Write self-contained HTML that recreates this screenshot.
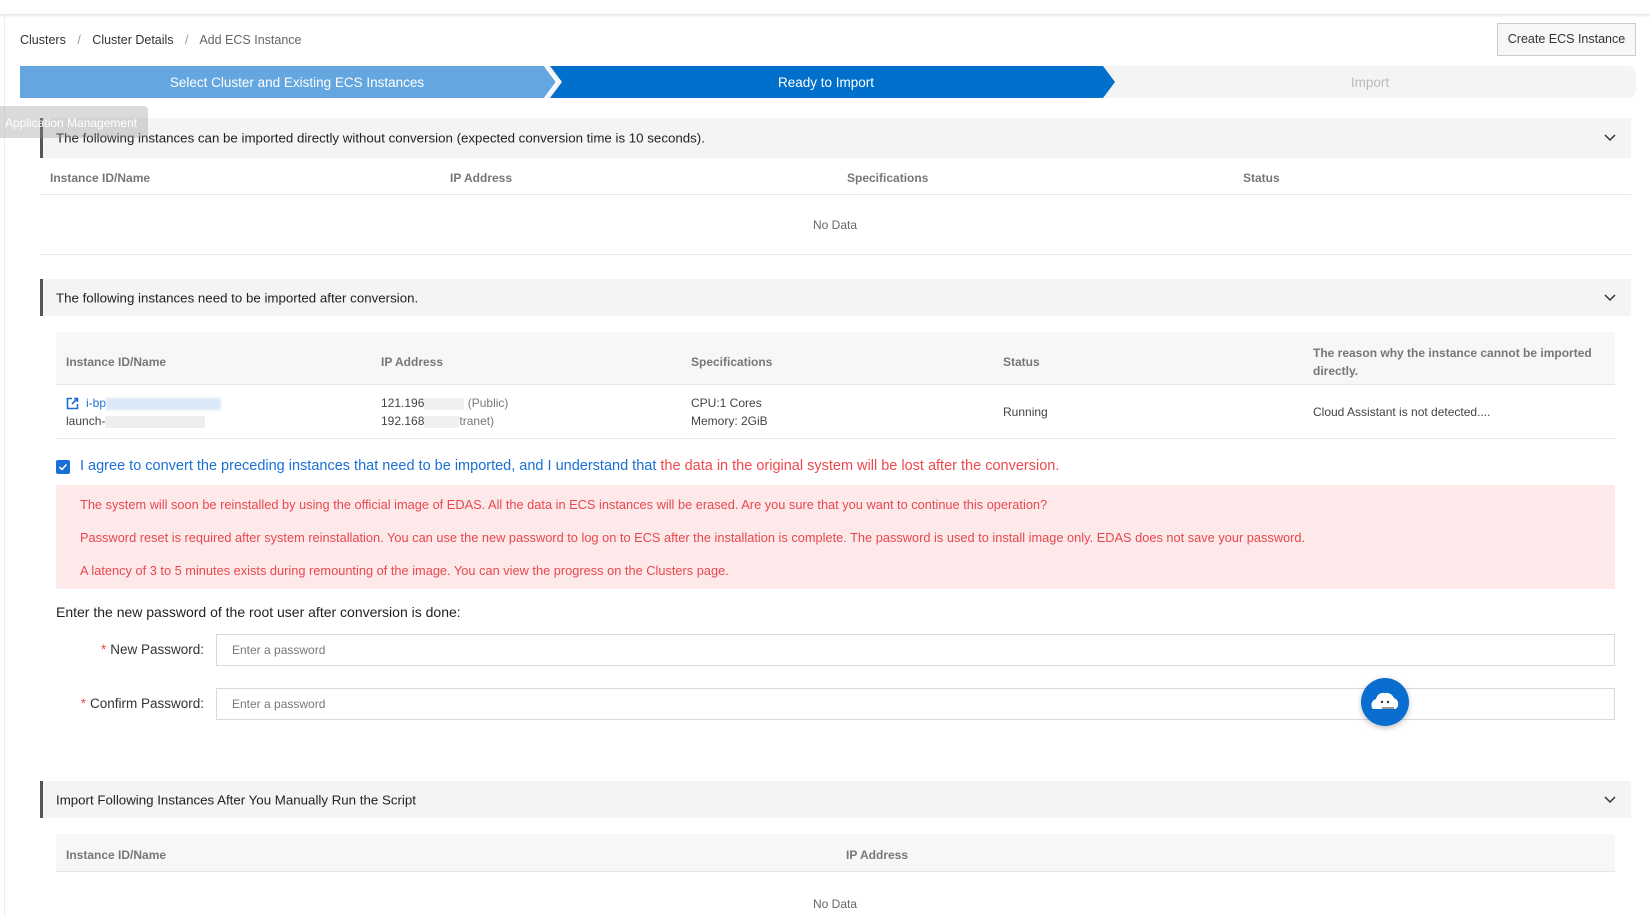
<!DOCTYPE html>
<html><head><meta charset="utf-8"><style>
*{margin:0;padding:0;box-sizing:border-box}
body{width:1650px;height:917px;overflow:hidden;background:#fff;font-family:"Liberation Sans",sans-serif;color:#333;position:relative}
.a{position:absolute;white-space:nowrap}
.sec{position:absolute;left:40px;width:1591px;background:#f3f4f6;border-left:3px solid #555;font-size:13.3px;color:#222}
.sec span{position:absolute;left:13px;top:50%;transform:translateY(-50%)}
.chev{position:absolute;right:14px;top:50%;margin-top:-7px}
.th{font-size:12px;font-weight:bold;color:#777}
.td{font-size:12px;color:#444}
.red{font-size:12.8px;color:#e8484d}
.inp{position:absolute;left:216px;width:1399px;height:32px;border:1px solid #d9d9d9;font-size:12px;color:#777;padding-left:15px;line-height:30px}
.lbl{position:absolute;right:1446px;font-size:13.5px;color:#333;white-space:nowrap}
.lbl b{color:#e8484d;font-weight:normal;margin-right:4px}
</style></head><body>
<div class="a" style="left:0;top:0;width:1650px;height:14px;background:#fff;box-shadow:0 1px 3px rgba(0,0,0,.15)"></div>
<div class="a" style="left:4px;top:14px;width:1px;height:903px;background:#eee"></div>
<div class="a" style="left:20px;top:33px;font-size:12.5px;color:#333">Clusters <span style="color:#999;margin:0 8px">/</span> Cluster Details <span style="color:#999;margin:0 8px">/</span> <span style="color:#666">Add ECS Instance</span></div>
<div class="a" style="left:1497px;top:23px;width:139px;height:33px;border:1px solid #ccc;background:#f7f7f7;font-size:12.5px;line-height:31px;text-align:center;color:#333">Create ECS Instance</div>
<svg class="a" style="left:20px;top:66px" width="1616" height="32">
<path d="M0 0H1608a8 8 0 0 1 8 8V24a8 8 0 0 1-8 8H0Z" fill="#f4f4f5"/>
<path d="M530 0H1083L1095 16 1083 32H530L542 16Z" fill="#0070cc"/>
<path d="M0 0H525L537 16 525 32H0Z" fill="#64a6df"/>
<path d="M525 0L537 16 525 32" stroke="#fff" stroke-width="2" fill="none"/>
<text x="277" y="21" font-size="13.5" fill="#fff" text-anchor="middle" font-family="Liberation Sans">Select Cluster and Existing ECS Instances</text>
<text x="806" y="21" font-size="13.5" fill="#fff" text-anchor="middle" font-family="Liberation Sans">Ready to Import</text>
<text x="1350" y="21" font-size="13.5" fill="#bbb" text-anchor="middle" font-family="Liberation Sans">Import</text>
</svg>

<div class="sec" style="top:118px;height:40px"><span>The following instances can be imported directly without conversion (expected conversion time is 10 seconds).</span>
<svg class="chev" width="14" height="14"><path d="M2 4L7 9 12 4" stroke="#333" stroke-width="1.5" fill="none"/></svg></div>
<div class="a" style="left:0;top:106px;width:148px;height:32px;background:rgba(150,150,150,.35);border-radius:0 4px 4px 0"></div>
<div class="a" style="left:5px;top:116px;font-size:12px;color:#fff">Application Management</div>

<div class="a" style="left:40px;top:158px;width:1591px;height:37px;border-bottom:1px solid #e6e6e6"></div>
<div class="a th" style="left:50px;top:171px">Instance ID/Name</div>
<div class="a th" style="left:450px;top:171px">IP Address</div>
<div class="a th" style="left:847px;top:171px">Specifications</div>
<div class="a th" style="left:1243px;top:171px">Status</div>
<div class="a td" style="left:813px;top:218px;color:#666">No Data</div>
<div class="a" style="left:40px;top:254px;width:1591px;height:1px;background:#e6e6e6"></div>

<div class="sec" style="top:279px;height:37px"><span>The following instances need to be imported after conversion.</span>
<svg class="chev" width="14" height="14"><path d="M2 4L7 9 12 4" stroke="#333" stroke-width="1.5" fill="none"/></svg></div>

<div class="a" style="left:56px;top:332px;width:1559px;height:53px;background:#f7f7f7;border-bottom:1px solid #e6e6e6"></div>
<div class="a th" style="left:66px;top:355px">Instance ID/Name</div>
<div class="a th" style="left:381px;top:355px">IP Address</div>
<div class="a th" style="left:691px;top:355px">Specifications</div>
<div class="a th" style="left:1003px;top:355px">Status</div>
<div class="a th" style="left:1313px;top:344px;line-height:18px">The reason why the instance cannot be imported<br>directly.</div>
<svg class="a" style="left:66px;top:397px" width="13" height="13"><path d="M6 1.5H1.5V11.5H11.5V7M8 1.5H11.5V5M11.5 1.5L6 7" stroke="#1a6fd6" stroke-width="1.6" fill="none"/></svg>
<div class="a td" style="left:86px;top:396px;color:#1a6fd6">i-bp<span style="display:inline-block;width:115px;height:12px;background:#dbe8f8;vertical-align:middle;filter:blur(1px)"></span></div>
<div class="a td" style="left:66px;top:414px">launch-<span style="display:inline-block;width:100px;height:12px;background:#eee;vertical-align:middle"></span></div>
<div class="a td" style="left:381px;top:396px">121.196<span style="display:inline-block;width:40px;height:12px;background:#f0f0f0;vertical-align:middle"></span> <span style="color:#777">(Public)</span></div>
<div class="a td" style="left:381px;top:414px">192.168<span style="display:inline-block;width:35px;height:12px;background:#f0f0f0;vertical-align:middle"></span><span style="color:#777">tranet)</span></div>
<div class="a td" style="left:691px;top:396px">CPU:1 Cores</div>
<div class="a td" style="left:691px;top:414px">Memory: 2GiB</div>
<div class="a td" style="left:1003px;top:405px">Running</div>
<div class="a td" style="left:1313px;top:405px">Cloud Assistant is not detected....</div>
<div class="a" style="left:56px;top:438px;width:1559px;height:1px;background:#e6e6e6"></div>

<svg class="a" style="left:56px;top:460px" width="14" height="14"><rect width="14" height="14" rx="2" fill="#1a6fd6"/><path d="M3.5 7L6 9.5 10.5 4.5" stroke="#fff" stroke-width="1.6" fill="none"/></svg>
<div class="a" style="left:80px;top:458px;font-size:14.5px;color:#1a6fd6">I agree to convert the preceding instances that need to be imported, and I understand that <span style="color:#f0484d">the data in the original system will be lost after the conversion.</span></div>
<div class="a" style="left:56px;top:485px;width:1559px;height:104px;background:#fde9ea"></div>
<div class="a red" style="left:80px;top:497px">The system will soon be reinstalled by using the official image of EDAS. All the data in ECS instances will be erased. Are you sure that you want to continue this operation?</div>
<div class="a red" style="left:80px;top:530px">Password reset is required after system reinstallation. You can use the new password to log on to ECS after the installation is complete. The password is used to install image only. EDAS does not save your password.</div>
<div class="a red" style="left:80px;top:563px">A latency of 3 to 5 minutes exists during remounting of the image. You can view the progress on the Clusters page.</div>
<div class="a" style="left:56px;top:604px;font-size:14px;color:#222">Enter the new password of the root user after conversion is done:</div>
<div class="lbl" style="top:642px"><b>*</b>New Password:</div>
<div class="inp" style="top:634px">Enter a password</div>
<div class="lbl" style="top:696px"><b>*</b>Confirm Password:</div>
<div class="inp" style="top:688px">Enter a password</div>
<svg class="a" style="left:1358px;top:675px" width="56" height="56"><circle cx="27" cy="27" r="24" fill="#0a6ed1" style="filter:drop-shadow(0 2px 3px rgba(0,0,0,.25))"/><path d="M14 33Q12 26 18 24Q20 17 27 18Q33 17 36 23Q41 25 40 31Q39 34 36 34H17Q14 34 14 33Z" fill="#fff"/><circle cx="24" cy="27" r="1.2" fill="#333"/><circle cx="30" cy="27" r="1.2" fill="#333"/><path d="M24 33H36" stroke="#333" stroke-width="1"/></svg>

<div class="sec" style="top:781px;height:37px"><span>Import Following Instances After You Manually Run the Script</span>
<svg class="chev" width="14" height="14"><path d="M2 4L7 9 12 4" stroke="#333" stroke-width="1.5" fill="none"/></svg></div>
<div class="a" style="left:56px;top:834px;width:1559px;height:38px;background:#f7f7f7;border-bottom:1px solid #e6e6e6"></div>
<div class="a th" style="left:66px;top:848px">Instance ID/Name</div>
<div class="a th" style="left:846px;top:848px">IP Address</div>
<div class="a td" style="left:813px;top:897px;color:#666">No Data</div>
</body></html>
